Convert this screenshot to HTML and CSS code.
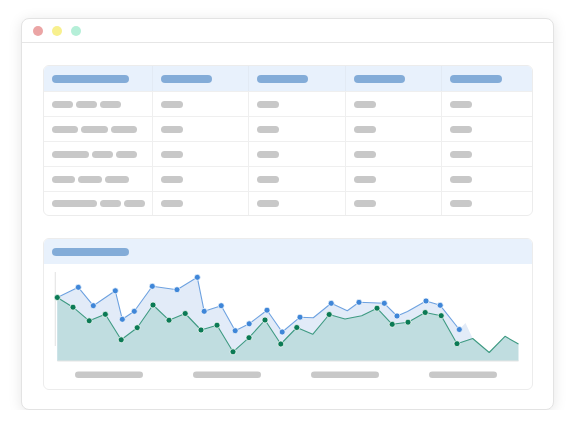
FILE: index.html
```html
<!DOCTYPE html>
<html lang="en">
<head>
<meta charset="utf-8">
<title>Dashboard sketch</title>
<link rel="stylesheet" href="styles.css">
</head>
<body>
<div class="window">
  <div class="titlebar">
    <span class="dot dot-red"></span>
    <span class="dot dot-yellow"></span>
    <span class="dot dot-green"></span>
  </div>
  <div class="content">
    <div class="table">
      <div class="row head">
        <div class="cell"><span class="hbar w77"></span></div>
        <div class="cell"><span class="hbar w51"></span></div>
        <div class="cell"><span class="hbar w51"></span></div>
        <div class="cell"><span class="hbar w51"></span></div>
        <div class="cell"><span class="hbar w52"></span></div>
      </div>
      <div class="row">
        <div class="cell"><span class="gbar w21"></span><span class="gbar w21"></span><span class="gbar w21"></span></div>
        <div class="cell"><span class="gbar w22"></span></div>
        <div class="cell"><span class="gbar w22"></span></div>
        <div class="cell"><span class="gbar w22"></span></div>
        <div class="cell"><span class="gbar w22"></span></div>
      </div>
      <div class="row">
        <div class="cell"><span class="gbar w26"></span><span class="gbar w27"></span><span class="gbar w26"></span></div>
        <div class="cell"><span class="gbar w22"></span></div>
        <div class="cell"><span class="gbar w22"></span></div>
        <div class="cell"><span class="gbar w22"></span></div>
        <div class="cell"><span class="gbar w22"></span></div>
      </div>
      <div class="row">
        <div class="cell"><span class="gbar w37"></span><span class="gbar w21"></span><span class="gbar w21"></span></div>
        <div class="cell"><span class="gbar w22"></span></div>
        <div class="cell"><span class="gbar w22"></span></div>
        <div class="cell"><span class="gbar w22"></span></div>
        <div class="cell"><span class="gbar w22"></span></div>
      </div>
      <div class="row">
        <div class="cell"><span class="gbar w23"></span><span class="gbar w24"></span><span class="gbar w24"></span></div>
        <div class="cell"><span class="gbar w22"></span></div>
        <div class="cell"><span class="gbar w22"></span></div>
        <div class="cell"><span class="gbar w22"></span></div>
        <div class="cell"><span class="gbar w22"></span></div>
      </div>
      <div class="row">
        <div class="cell"><span class="gbar w45"></span><span class="gbar w21"></span><span class="gbar w21"></span></div>
        <div class="cell"><span class="gbar w22"></span></div>
        <div class="cell"><span class="gbar w22"></span></div>
        <div class="cell"><span class="gbar w22"></span></div>
        <div class="cell"><span class="gbar w22"></span></div>
      </div>
    </div>

    <div class="chart-card">
      <div class="chart-head"><span class="hbar w77"></span></div>
      <svg class="chart" viewBox="44 264 488 125" width="488" height="125" xmlns="http://www.w3.org/2000/svg">
        <line x1="55.3" y1="272" x2="55.3" y2="346" stroke="#e6e6e6" stroke-width="1.2"/>
        <polygon fill="#e2ebf8" points="57.3,297.5 78.3,287.3 93.3,305.7 115.3,290.8 122.3,319.3 134.3,311.3 152.3,286.3 177,289.7 197.3,277.3 204.2,311.3 221.2,305.7 235.2,330.7 249.2,323.8 267,310.2 282.2,332 300,317.2 313.3,317.7 331.2,303.3 347.3,310.8 359,302.3 384.3,303.3 397,316 407.5,311.5 426,301 440.2,305.3 459.3,329.5 465.5,323 472.7,338.5 472.7,361 57.3,361"/>
        <polygon fill="#c0dde0" points="57.3,297.5 73,307.2 89.2,320.8 105.3,314.3 121.2,339.8 137.2,327.7 153,305 169,320.2 185.2,313.5 201,330 217,325.2 233,351.8 249,337.7 265,320 280.8,344 296.8,327.5 312.7,334.3 329.2,314.5 345,319 361.7,315.7 377,308.2 392.2,324.3 408,322.2 425.2,312.5 441.2,315.7 457,343.7 472.7,338.5 489.2,352.5 505,336.3 518.5,344 518.5,361 57.3,361"/>
        <line x1="57.3" y1="361" x2="518.5" y2="361" stroke="#e4e4e4" stroke-width="1"/>
        <polyline fill="none" stroke="#6ea2e0" stroke-width="1.1" stroke-linejoin="round" points="57.3,297.5 78.3,287.3 93.3,305.7 115.3,290.8 122.3,319.3 134.3,311.3 152.3,286.3 177,289.7 197.3,277.3 204.2,311.3 221.2,305.7 235.2,330.7 249.2,323.8 267,310.2 282.2,332 300,317.2 313.3,317.7 331.2,303.3 347.3,310.8 359,302.3 384.3,303.3 397,316 407.5,311.5 426,301 440.2,305.3 459.3,329.5"/>
        <polyline fill="none" stroke="#3e9a82" stroke-width="1.1" stroke-linejoin="round" points="57.3,297.5 73,307.2 89.2,320.8 105.3,314.3 121.2,339.8 137.2,327.7 153,305 169,320.2 185.2,313.5 201,330 217,325.2 233,351.8 249,337.7 265,320 280.8,344 296.8,327.5 312.7,334.3 329.2,314.5 345,319 361.7,315.7 377,308.2 392.2,324.3 408,322.2 425.2,312.5 441.2,315.7 457,343.7 472.7,338.5 489.2,352.5 505,336.3 518.5,344"/>
        <g class="bdots" fill="#3f86d8" stroke="#ffffff" stroke-width="0.7">
          <circle cx="78.3" cy="287.3" r="3"/>
          <circle cx="93.3" cy="305.7" r="3"/>
          <circle cx="115.3" cy="290.8" r="3"/>
          <circle cx="122.3" cy="319.3" r="3"/>
          <circle cx="134.3" cy="311.3" r="3"/>
          <circle cx="152.3" cy="286.3" r="3"/>
          <circle cx="177" cy="289.7" r="3"/>
          <circle cx="197.3" cy="277.3" r="3"/>
          <circle cx="204.2" cy="311.3" r="3"/>
          <circle cx="221.2" cy="305.7" r="3"/>
          <circle cx="235.2" cy="330.7" r="3"/>
          <circle cx="249.2" cy="323.8" r="3"/>
          <circle cx="267" cy="310.2" r="3"/>
          <circle cx="282.2" cy="332" r="3"/>
          <circle cx="300" cy="317.2" r="3"/>
          <circle cx="331.2" cy="303.3" r="3"/>
          <circle cx="359" cy="302.3" r="3"/>
          <circle cx="384.3" cy="303.3" r="3"/>
          <circle cx="397" cy="316" r="3"/>
          <circle cx="426" cy="301" r="3"/>
          <circle cx="440.2" cy="305.3" r="3"/>
          <circle cx="459.3" cy="329.5" r="3"/>
        </g>
        <g class="gdots" fill="#0b7a55" stroke="#ffffff" stroke-width="0.7">
          <circle cx="57.3" cy="297.5" r="3"/>
          <circle cx="73" cy="307.2" r="3"/>
          <circle cx="89.2" cy="320.8" r="3"/>
          <circle cx="105.3" cy="314.3" r="3"/>
          <circle cx="121.2" cy="339.8" r="3"/>
          <circle cx="137.2" cy="327.7" r="3"/>
          <circle cx="153" cy="305" r="3"/>
          <circle cx="169" cy="320.2" r="3"/>
          <circle cx="185.2" cy="313.5" r="3"/>
          <circle cx="201" cy="330" r="3"/>
          <circle cx="217" cy="325.2" r="3"/>
          <circle cx="233" cy="351.8" r="3"/>
          <circle cx="249" cy="337.7" r="3"/>
          <circle cx="265" cy="320" r="3"/>
          <circle cx="280.8" cy="344" r="3"/>
          <circle cx="296.8" cy="327.5" r="3"/>
          <circle cx="329.2" cy="314.5" r="3"/>
          <circle cx="377" cy="308.2" r="3"/>
          <circle cx="392.2" cy="324.3" r="3"/>
          <circle cx="408" cy="322.2" r="3"/>
          <circle cx="425.2" cy="312.5" r="3"/>
          <circle cx="441.2" cy="315.7" r="3"/>
          <circle cx="457" cy="343.7" r="3"/>
        </g>
        <g fill="#c8c8c8">
          <rect x="75" y="371.5" width="68" height="6.5" rx="3.25"/>
          <rect x="193" y="371.5" width="68" height="6.5" rx="3.25"/>
          <rect x="311" y="371.5" width="68" height="6.5" rx="3.25"/>
          <rect x="429" y="371.5" width="68" height="6.5" rx="3.25"/>
        </g>
      </svg>
    </div>
  </div>
</div>
</body>
</html>
```
FILE: styles.css
```css
html, body {
  margin: 0;
  padding: 0;
  background: #ffffff;
  font-family: "Liberation Sans", Arial, sans-serif;
}

body {
  padding: 18px 0 0 21px;
}

.window {
  box-sizing: border-box;
  width: 533px;
  height: 392px;
  background: #ffffff;
  border: 1px solid #e3e3e3;
  border-radius: 8px;
  box-shadow: 0 2px 14px rgba(0, 0, 0, 0.10);
  display: flex;
  flex-direction: column;
  overflow: hidden;
}

.titlebar {
  box-sizing: border-box;
  height: 24px;
  border-bottom: 1px solid #e6e6e6;
  display: flex;
  align-items: center;
  gap: 9px;
  padding: 0 0 0 11px;
  flex-shrink: 0;
}

.dot {
  width: 10px;
  height: 10px;
  border-radius: 50%;
  display: block;
}
.dot-red { background: #eba5a5; }
.dot-yellow { background: #f8f08e; }
.dot-green { background: #b5efd8; }

.content {
  padding: 22px 20px 0 21px;
  display: flex;
  flex-direction: column;
  gap: 22px;
}

.table {
  border: 1px solid #ececec;
  border-radius: 6px;
  overflow: hidden;
}

.row {
  display: grid;
  grid-template-columns: 109px 96px 97px 96px 1fr;
  height: 25px;
  border-top: 1px solid #efefef;
  box-sizing: border-box;
}
.row.head {
  border-top: none;
  background: #e8f1fc;
  height: 25px;
}
.row:last-child { height: 24px; }

.cell {
  display: flex;
  align-items: center;
  gap: 3px;
  padding-left: 8px;
  border-right: 1px solid #efefef;
}
.row.head .cell { border-right-color: #e2eaf4; }
.cell:last-child { border-right: none; }

.hbar {
  display: block;
  height: 8px;
  border-radius: 4px;
  background: #83acd8;
}
.gbar {
  display: block;
  height: 7px;
  border-radius: 3.5px;
  background: #c8c8c8;
}

.w21 { width: 21px; }
.w22 { width: 22px; }
.w23 { width: 23px; }
.w24 { width: 24px; }
.w26 { width: 26px; }
.w27 { width: 27px; }
.w37 { width: 37px; }
.w45 { width: 45px; }
.w51 { width: 51px; }
.w52 { width: 52px; }
.w77 { width: 77px; }

.chart-card {
  border: 1px solid #ececec;
  border-radius: 6px;
  overflow: hidden;
  display: flex;
  flex-direction: column;
}

.chart-head {
  height: 25px;
  background: #e8f1fc;
  display: flex;
  align-items: center;
  padding-left: 8px;
}

.chart {
  display: block;
  width: 488px;
  height: 125px;
}
```
